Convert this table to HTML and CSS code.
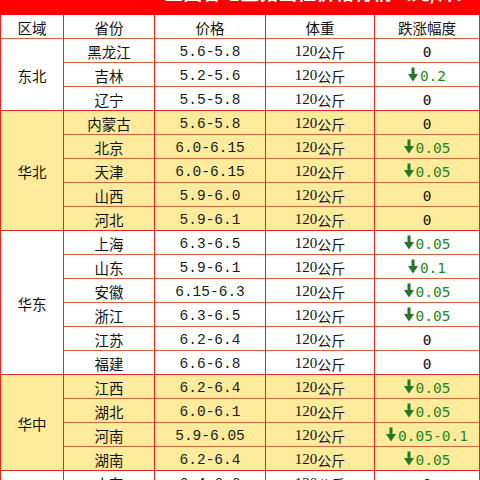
FILE: index.html
```html
<!DOCTYPE html>
<html lang="zh-CN">
<head>
<meta charset="utf-8">
<link rel="stylesheet" href="styles.css">
</head>
<body>
<div class="titlebar"><span class="title">全国各地生猪出栏价格行情（元/斤）</span></div>
<div class="grid">
  <div class="c h region">区域</div><div class="c h">省份</div><div class="c h">价格</div><div class="c h">体重</div><div class="c h">跌涨幅度</div>

  <div class="c region w last" style="grid-row: span 3">东北</div>
  <div class="c w">黑龙江</div><div class="c w p">5.6-5.8</div><div class="c w wt"><span class="n">120</span>公斤</div><div class="c w ch">0</div>
  <div class="c w">吉林</div><div class="c w p">5.2-5.6</div><div class="c w wt"><span class="n">120</span>公斤</div><div class="c w ch dn"><svg class="ar" viewBox="0 0 10 14"><rect x="3.5" y="0" width="3" height="8"/><polygon points="0,6.5 10,6.5 5,14"/></svg>0.2</div>
  <div class="c w last">辽宁</div><div class="c w p last">5.5-5.8</div><div class="c w wt last"><span class="n">120</span>公斤</div><div class="c w ch last">0</div>

  <div class="c region y last" style="grid-row: span 5">华北</div>
  <div class="c y">内蒙古</div><div class="c y p">5.6-5.8</div><div class="c y wt"><span class="n">120</span>公斤</div><div class="c y ch">0</div>
  <div class="c y">北京</div><div class="c y p">6.0-6.15</div><div class="c y wt"><span class="n">120</span>公斤</div><div class="c y ch dn"><svg class="ar" viewBox="0 0 10 14"><rect x="3.5" y="0" width="3" height="8"/><polygon points="0,6.5 10,6.5 5,14"/></svg>0.05</div>
  <div class="c y">天津</div><div class="c y p">6.0-6.15</div><div class="c y wt"><span class="n">120</span>公斤</div><div class="c y ch dn"><svg class="ar" viewBox="0 0 10 14"><rect x="3.5" y="0" width="3" height="8"/><polygon points="0,6.5 10,6.5 5,14"/></svg>0.05</div>
  <div class="c y">山西</div><div class="c y p">5.9-6.0</div><div class="c y wt"><span class="n">120</span>公斤</div><div class="c y ch">0</div>
  <div class="c y last">河北</div><div class="c y p last">5.9-6.1</div><div class="c y wt last"><span class="n">120</span>公斤</div><div class="c y ch last">0</div>

  <div class="c region w last" style="grid-row: span 6">华东</div>
  <div class="c w">上海</div><div class="c w p">6.3-6.5</div><div class="c w wt"><span class="n">120</span>公斤</div><div class="c w ch dn"><svg class="ar" viewBox="0 0 10 14"><rect x="3.5" y="0" width="3" height="8"/><polygon points="0,6.5 10,6.5 5,14"/></svg>0.05</div>
  <div class="c w">山东</div><div class="c w p">5.9-6.1</div><div class="c w wt"><span class="n">120</span>公斤</div><div class="c w ch dn"><svg class="ar" viewBox="0 0 10 14"><rect x="3.5" y="0" width="3" height="8"/><polygon points="0,6.5 10,6.5 5,14"/></svg>0.1</div>
  <div class="c w">安徽</div><div class="c w p">6.15-6.3</div><div class="c w wt"><span class="n">120</span>公斤</div><div class="c w ch dn"><svg class="ar" viewBox="0 0 10 14"><rect x="3.5" y="0" width="3" height="8"/><polygon points="0,6.5 10,6.5 5,14"/></svg>0.05</div>
  <div class="c w">浙江</div><div class="c w p">6.3-6.5</div><div class="c w wt"><span class="n">120</span>公斤</div><div class="c w ch dn"><svg class="ar" viewBox="0 0 10 14"><rect x="3.5" y="0" width="3" height="8"/><polygon points="0,6.5 10,6.5 5,14"/></svg>0.05</div>
  <div class="c w">江苏</div><div class="c w p">6.2-6.4</div><div class="c w wt"><span class="n">120</span>公斤</div><div class="c w ch">0</div>
  <div class="c w last">福建</div><div class="c w p last">6.6-6.8</div><div class="c w wt last"><span class="n">120</span>公斤</div><div class="c w ch last">0</div>

  <div class="c region y last" style="grid-row: span 4">华中</div>
  <div class="c y">江西</div><div class="c y p">6.2-6.4</div><div class="c y wt"><span class="n">120</span>公斤</div><div class="c y ch dn"><svg class="ar" viewBox="0 0 10 14"><rect x="3.5" y="0" width="3" height="8"/><polygon points="0,6.5 10,6.5 5,14"/></svg>0.05</div>
  <div class="c y">湖北</div><div class="c y p">6.0-6.1</div><div class="c y wt"><span class="n">120</span>公斤</div><div class="c y ch dn"><svg class="ar" viewBox="0 0 10 14"><rect x="3.5" y="0" width="3" height="8"/><polygon points="0,6.5 10,6.5 5,14"/></svg>0.05</div>
  <div class="c y">河南</div><div class="c y p">5.9-6.05</div><div class="c y wt"><span class="n">120</span>公斤</div><div class="c y ch dn"><svg class="ar" viewBox="0 0 10 14"><rect x="3.5" y="0" width="3" height="8"/><polygon points="0,6.5 10,6.5 5,14"/></svg>0.05-0.1</div>
  <div class="c y last">湖南</div><div class="c y p last">6.2-6.4</div><div class="c y wt last"><span class="n">120</span>公斤</div><div class="c y ch dn last"><svg class="ar" viewBox="0 0 10 14"><rect x="3.5" y="0" width="3" height="8"/><polygon points="0,6.5 10,6.5 5,14"/></svg>0.05</div>

  <div class="c region w" style="grid-row: span 3">华南</div>
  <div class="c w">广东</div><div class="c w p">6.4-6.6</div><div class="c w wt"><span class="n">120</span>公斤</div><div class="c w ch">0</div>
</div>
</body>
</html>
```

FILE: styles.css
```css
html, body {
  margin: 0;
  padding: 0;
  background: #ffffff;
  overflow: hidden;
  width: 480px;
  height: 480px;
}

.titlebar {
  height: 15px;
  background: #ff0000;
  overflow: hidden;
  display: flex;
  justify-content: center;
  padding-left: 160px;
}

.title {
  display: block;
  margin-top: -18.5px;
  color: #ffffff;
  font-family: "Noto Sans CJK SC", sans-serif;
  font-weight: 700;
  font-size: 19px;
  line-height: 19px;
  white-space: nowrap;
}

.grid {
  display: grid;
  grid-template-columns: 64px 91px 111px 109px 105px;
  grid-auto-rows: 24px;
}

.c {
  box-sizing: border-box;
  display: flex;
  align-items: center;
  justify-content: center;
  border-right: 1px solid #e8231c;
  border-bottom: 1px solid #d8643c;
  font-family: "Noto Sans CJK SC", sans-serif;
  font-size: 14.5px;
  color: #111111;
  padding-top: 2px;
  white-space: nowrap;
}

.region {
  border-left: 1px solid #e8231c;
}

.h {
  background: #ffffff;
}

.w {
  background: #ffffff;
}

.y {
  background: #ffeb9c;
}

.last {
  border-bottom: 1px solid #e8231c;
}

.p {
  font-family: "Liberation Mono", monospace;
  font-size: 14.5px;
  color: #1a1a1a;
}

.wt {
  font-size: 14px;
}

.n {
  font-family: "Liberation Serif", serif;
  font-size: 15px;
}

.ch {
  font-family: "DejaVu Sans Mono", monospace;
  font-size: 14.5px;
  font-weight: 500;
}

.dn {
  color: #1e8a22;
}

.ar {
  width: 10px;
  height: 15px;
  fill: #1e7a22;
  margin-right: 2px;
  margin-top: -2px;
}
```
